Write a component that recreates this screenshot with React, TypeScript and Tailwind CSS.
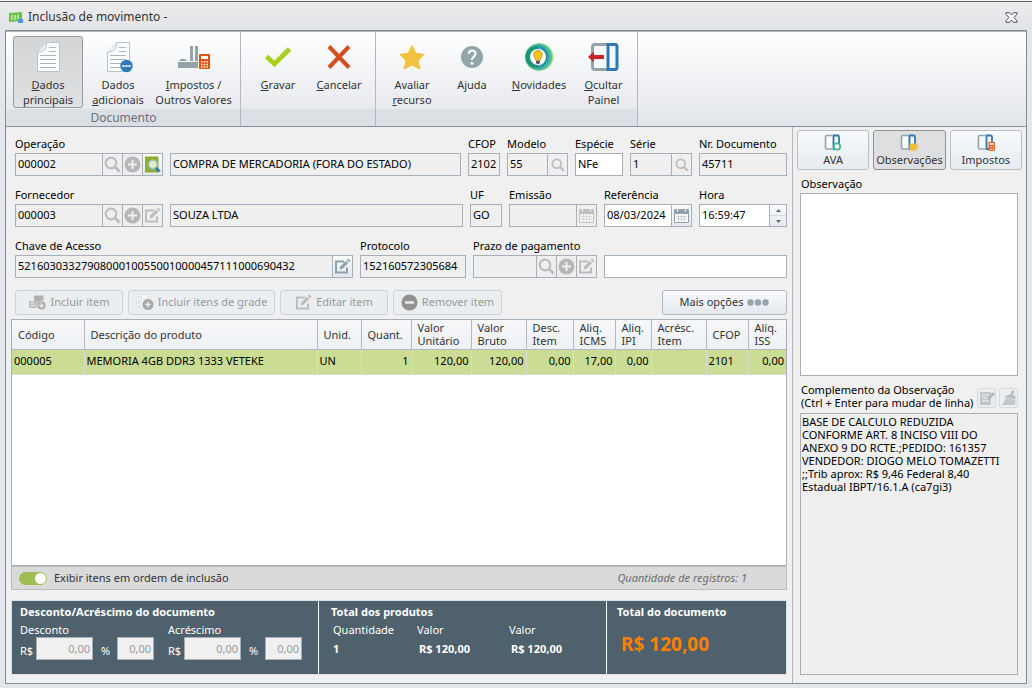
import React from "react";
import type { ReactNode } from "react";

const frame = "border border-[#a9afba]";

function DocIcon({ dots = false }: { dots?: boolean }) {
  return (
    <svg width="32" height="32" viewBox="0 0 32 32" aria-hidden="true">
      <path d="M5.500 11.500 L14.500 1.500 H27.500 V30.500 H5.500 Z" fill="#fdfdfe" stroke="#b4c3c9" />
      <path d="M5.500 11.500 C10 10 14.500 11 14.500 1.500" fill="#eef2f3" stroke="#b4c3c9" />
      <path d="M17 6.500H24M17 10.500H24M8 14.500H24M8 18.500H24M8 22.500H24M8 26.500H24" stroke="#a9b9bf" />
      {dots && (
        <g>
          <circle cx="24.500" cy="25" r="6.200" fill="#2f78bd" />
          <path d="M20.500 24h2v2h-2zM23.500 24h2v2h-2zM26.500 24h2v2h-2z" fill="#fff" />
        </g>
      )}
    </svg>
  );
}

function Calc({ x, y, s }: { x: number; y: number; s: number }) {
  return (
    <g transform={`translate(${x} ${y}) scale(${s})`}>
      <rect width="11" height="15" rx="1" fill="#e0530f" />
      <path d="M2 2h7v3h-7z" fill="#fff" />
      <path d="M2 7h1.500v1.500h-1.500zM4.800 7h1.500v1.500h-1.500zM7.500 7h1.500v1.500h-1.500zM2 9.700h1.500v1.500h-1.500zM4.800 9.700h1.500v1.500h-1.500zM7.500 9.700h1.500v1.500h-1.500zM2 12.300h1.500v1.500h-1.500zM4.800 12.300h1.500v1.500h-1.500zM7.500 12.300h1.500v1.500h-1.500z" fill="#fff" />
    </g>
  );
}

function FactoryIcon() {
  return (
    <svg width="32" height="32" viewBox="0 0 32 32" aria-hidden="true">
      <path d="M0 21h20v6H0zM1 20c1-3 7-3 8 0zM12 5h3v15h-3zM17 5h3v15h-3z" fill="#92a3aa" />
      <Calc x={21} y={13} s={1} />
    </svg>
  );
}

function CheckIcon() {
  return (
    <svg width="32" height="32" viewBox="0 0 32 32" aria-hidden="true">
      <path d="M4.500 15.500 L12.500 23 L27.500 8" fill="none" stroke="#a9d01c" strokeWidth="4.800" />
    </svg>
  );
}

function CrossIcon() {
  return (
    <svg width="32" height="32" viewBox="0 0 32 32" aria-hidden="true">
      <path d="M6 5.500 L26 26.500 M26 5.500 L6 26.500" fill="none" stroke="#d2501f" strokeWidth="4" />
    </svg>
  );
}

function StarIcon() {
  return (
    <svg width="32" height="32" viewBox="0 0 32 32" aria-hidden="true">
      <path d="M16 4.500 L19.800 12.200 L28 13.500 L22.200 19.500 L23.800 28 L16 24 L8.200 28 L9.800 19.500 L4 13.500 L12.200 12.200 Z" fill="#f3c13f" stroke="#f3c13f" strokeLinejoin="round" />
    </svg>
  );
}

function HelpIcon() {
  return (
    <svg width="32" height="32" viewBox="0 0 32 32" aria-hidden="true">
      <circle cx="16" cy="16" r="11" fill="#93a4ab" />
      <path d="M12.800 12.800 C12.800 8.500 19.500 8.500 19.500 12.500 C19.500 15.500 16 15.500 16 19" fill="none" stroke="#fff" strokeWidth="2.200" />
      <circle cx="16" cy="22.200" r="1.500" fill="#fff" />
    </svg>
  );
}

function NewsIcon() {
  return (
    <svg width="32" height="32" viewBox="0 0 32 32" aria-hidden="true">
      <circle cx="17" cy="16" r="13.500" fill="#92e68a" />
      <circle cx="15.500" cy="16" r="13.500" fill="#4fc08c" />
      <path d="M14 3.500 A12 12 0 0 1 14 28 Z" fill="#35a2cf" />
      <circle cx="13.500" cy="16" r="11" fill="#1d9478" />
      <path d="M15 5.500 A11 11 0 0 1 15 26.500 Z" fill="#3fa6d2" />
      <circle cx="15" cy="16" r="8" fill="#fff" />
      <path d="M15 9.500 C10 9.500 10 14.500 12 17 L13 19.500 H17 L18 17 C20 14.500 20 9.500 15 9.500 Z" fill="#fbc416" stroke="#9a8430" strokeWidth=".7" />
      <path d="M13 20h4v2l-1 1h-2l-1-1z" fill="#555c66" />
    </svg>
  );
}

function HidePanelIcon() {
  return (
    <svg width="32" height="32" viewBox="0 0 32 32" aria-hidden="true">
      <path d="M19 3.500 H7 Q4.500 3.500 4.500 6 V26 Q4.500 28.500 7 28.500 H19" fill="#f6f8f9" stroke="#93a4ab" strokeWidth="3" />
      <path d="M20 3.500 H27 Q29 3.500 29 6 V26 Q29 28.500 27 28.500 H20 Z" fill="#f4f8fb" stroke="#3078b5" strokeWidth="3" />
      <path d="M0 16 L6 10.500 V14 H16 V18 H6 V21.500 Z" fill="#c9252c" />
    </svg>
  );
}

function PanelIcon({ kind }: { kind: "ava" | "obs" | "imp" }) {
  return (
    <svg width="18" height="17" viewBox="0 0 18 17" aria-hidden="true">
      <path d="M8 1.500 H3 Q1.500 1.500 1.500 3 V13.500 Q1.500 15 3 15 H8" fill="#fafbfc" stroke="#93a4ab" strokeWidth="1.600" />
      <path d="M9.500 1.500 H13.500 Q15 1.500 15 3 V13.500 Q15 15 13.500 15 H9.500 Z" fill="#f6f9fc" stroke="#3078b5" strokeWidth="1.800" />
      {kind === "ava" && <circle cx="13" cy="12.500" r="3.200" fill="#fff" stroke="#3fb98c" strokeWidth="1.800" />}
      {kind === "obs" && <path d="M9.500 9.500h8v5l-1.500 2H9.500z" fill="#f3bd3c" />}
      {kind === "imp" && <Calc x={11.500} y={8} s={0.58} />}
    </svg>
  );
}

function Magnifier({ small = false }: { small?: boolean }) {
  const size = small ? 14 : 17;
  return (
    <svg width={size} height={size} viewBox="0 0 17 17" aria-hidden="true">
      <circle cx="7" cy="7" r="5.300" fill="none" stroke="#bdbdbd" strokeWidth="2.200" />
      <path d="M11 11 L15.500 15.500" stroke="#bdbdbd" strokeWidth="2.800" />
    </svg>
  );
}

function PlusDisc() {
  return (
    <svg width="17" height="17" viewBox="0 0 17 17" aria-hidden="true">
      <circle cx="8.500" cy="8.500" r="8" fill="#b7b7b7" />
      <path d="M8.500 4v9M4 8.500h9" stroke="#efefef" strokeWidth="2" />
    </svg>
  );
}

function EditIcon({ color = "#bdbdbd" }: { color?: string }) {
  return (
    <svg width="17" height="17" viewBox="0 0 17 17" aria-hidden="true">
      <path d="M10 3.500 H2 V14.500 H13 V9.500" fill="none" stroke={color} strokeWidth="2" />
      <path d="M5.500 11.500 L6.200 8.500 L12 2.700 L14.300 5 L8.500 10.800 Z" fill={color} />
      <path d="M12.800 2 L14.200 .6 L16.500 2.800 L15.100 4.200 Z" fill={color} />
    </svg>
  );
}

function InspectIcon() {
  return (
    <svg width="17" height="17" viewBox="0 0 17 17" aria-hidden="true">
      <path d="M1 0.500h13.500v16H1z" fill="#8fad33" />
      <circle cx="9" cy="8.500" r="4.200" fill="#e9ecc0" stroke="#9cc4d8" strokeWidth="1.500" />
      <path d="M12 12 L15.500 15.500" stroke="#2f78bd" strokeWidth="2.600" />
    </svg>
  );
}

function CalendarIcon({ on = false }: { on?: boolean }) {
  const c = on ? "#8fa2a9" : "#bfbfbf";
  return (
    <svg width="17" height="17" viewBox="0 0 17 17" aria-hidden="true">
      <path d="M1.500 2.500h14v13h-14z" fill={on ? "#fff" : "#f3f3f3"} stroke={c} />
      <path d="M1 3h15v4H1z" fill={c} />
      <path d="M4.500 1v3.500M12.500 1v3.500" stroke={on ? "#eef1f3" : "#efefef"} strokeWidth="1.200" />
      <path d="M3 9.500h11M3 12h11M5.500 7.500v7M8.500 7.500v7M11.500 7.500v7" stroke={c} strokeOpacity=".55" strokeWidth=".8" />
    </svg>
  );
}

function AddItemIcon() {
  return (
    <svg width="18" height="17" viewBox="0 0 18 17" aria-hidden="true">
      <path d="M5 1.500h9.500v9H5z" fill="#b0b0b0" />
      <path d="M0 7h9v7H0z" fill="#c0c0c0" />
      <path d="M2 9h3M2 11.500h4" stroke="#e4e4e4" />
      <circle cx="12.500" cy="11.500" r="4.300" fill="#a9a9a9" stroke="#d8dadc" />
      <path d="M12.500 9v5M10 11.500h5" stroke="#eee" strokeWidth="1.400" />
    </svg>
  );
}

function AddGridIcon() {
  return (
    <svg width="18" height="17" viewBox="0 0 18 17" aria-hidden="true">
      <path d="M.5.500h12v13h-12zM5.500.500v13M.5 5h12M.5 9.500h12" fill="#f6f7f8" stroke="#e2e5e7" />
      <path d="M2 3h2M2 7.500h2M2 12h2" stroke="#c4c4c4" />
      <circle cx="12" cy="10.500" r="5.500" fill="#a9a9a9" />
      <path d="M12 7.800v5.400M9.300 10.500h5.400" stroke="#eee" strokeWidth="1.500" />
    </svg>
  );
}

function MinusDisc() {
  return (
    <svg width="17" height="17" viewBox="0 0 17 17" aria-hidden="true">
      <circle cx="8.500" cy="8.500" r="8" fill="#929292" />
      <path d="M4 8.500h9" stroke="#efefef" strokeWidth="2.400" />
    </svg>
  );
}

function RibbonButton({ icon, lines, hot, active, width }: { icon: ReactNode; lines: string[]; hot: number; active?: boolean; width: string }) {
  return (
    <button
      className={`flex h-[72px] flex-col items-center rounded-[3px] border pt-1 leading-[15px] whitespace-nowrap ${width} ${
        active ? "border-[#989ca2] bg-linear-to-b from-[#d4d5d7] to-[#dfe0e2]" : "border-transparent"
      }`}
    >
      <span className="mb-1 block h-8">{icon}</span>
      {lines.map((line, i) => (
        <span key={line} className="block">
          {i === hot ? (
            <>
              <u>{line[0]}</u>
              {line.slice(1)}
            </>
          ) : (
            line
          )}
        </span>
      ))}
    </button>
  );
}

function RibbonGroup({ caption, children }: { caption?: string; children: ReactNode }) {
  return (
    <div className="flex flex-col border-r border-[#b4b8be]">
      <div className="flex px-1.5 pt-1">{children}</div>
      <div className="mt-px h-[17px] bg-[#dcdfe3] text-center text-[12px] leading-[17px] text-[#6b7080]">{caption}</div>
    </div>
  );
}

function Field({ id, label, value = "", width, white, children }: { id: string; label?: string; value?: string; width: string; white?: boolean; children?: ReactNode }) {
  return (
    <div className={`flex min-w-0 flex-col ${width}`}>
      <label htmlFor={id} className="h-[17px] leading-4 whitespace-nowrap">
        {label}
      </label>
      <div className={`flex h-[23px] ${frame} ${white ? "bg-white" : "bg-[#efefef]"}`}>
        <input id={id} aria-label={label ? undefined : id} defaultValue={value} readOnly={!white} className="min-w-0 flex-1 bg-transparent pl-0.5 outline-none" />
        {children}
      </div>
    </div>
  );
}

function Addon({ label, on, children }: { label: string; on?: boolean; children: ReactNode }) {
  return (
    <button
      type="button"
      aria-label={label}
      className={`flex w-5 shrink-0 items-center justify-center border-l border-[#a9afba] ${on ? "bg-linear-to-b from-[#fafcfd] to-[#e3e8ee]" : ""}`}
    >
      {children}
    </button>
  );
}

function ActionButton({ width, icon, children }: { width: string; icon: ReactNode; children: ReactNode }) {
  return (
    <button disabled className={`flex h-[25px] items-center justify-center gap-1 rounded-[3px] border border-[#cdd2d7] bg-[#ebeef1] whitespace-nowrap text-[#97999c] ${width}`}>
      {icon}
      {children}
    </button>
  );
}

function SideTab({ kind, active, children }: { kind: "ava" | "obs" | "imp"; active?: boolean; children: ReactNode }) {
  return (
    <button
      className={`flex h-10 min-w-0 flex-1 flex-col items-center rounded-[3px] border pt-[3px] leading-[18px] text-[#333] ${
        active ? "border-[#8f9297] bg-[#dedfe1]" : "border-[#b9bec5] bg-linear-to-b from-[#f8fafc] to-[#e6ebf0]"
      }`}
    >
      <PanelIcon kind={kind} />
      {children}
    </button>
  );
}

const columns: { title: string; value: string; width: string; right?: boolean }[] = [
  { title: "Código", value: "000005", width: "w-[72px]" },
  { title: "Descrição do produto", value: "MEMORIA 4GB DDR3 1333 VETEKE", width: "" },
  { title: "Unid.", value: "UN", width: "w-[44px]" },
  { title: "Quant.", value: "1", width: "w-[50px]", right: true },
  { title: "Valor\nUnitário", value: "120,00", width: "w-[60px]", right: true },
  { title: "Valor\nBruto", value: "120,00", width: "w-[55px]", right: true },
  { title: "Desc.\nItem", value: "0,00", width: "w-[47px]", right: true },
  { title: "Aliq.\nICMS", value: "17,00", width: "w-[42px]", right: true },
  { title: "Aliq.\nIPI", value: "0,00", width: "w-[36px]", right: true },
  { title: "Acrésc.\nItem", value: "", width: "w-[55px]" },
  { title: "CFOP", value: "2101", width: "w-[42px]" },
  { title: "Alíq.\nISS", value: "0,00", width: "w-[38px]", right: true },
];

function Amount({ id, unit, name, width }: { id: string; unit: string; name: string; width: string }) {
  return (
    <div className="flex items-center">
      <label htmlFor={id} className="w-4 pt-1 whitespace-nowrap">
        {unit}
      </label>
      <input id={id} aria-label={`${name} ${unit}`} disabled defaultValue="0,00" className={`h-[23px] border border-[#a9afba] bg-[#f0f0f0] pr-0.5 text-right text-[#9b9b9b] ${width}`} />
    </div>
  );
}

export default function App() {
  return (
    <div className="flex min-h-screen flex-col border-t border-[#f4f4f4] bg-[#e4e7ea] font-['Noto_Sans','Open_Sans',sans-serif] text-[11px] text-black">
      <header className="flex h-[29px] items-center border-t border-[#5d6164] bg-linear-to-b from-[#ececee] to-[#e0e3e6] pt-0.5 pr-3.5 pl-2 text-[12px] text-[#333]">
        <svg width="17" height="14" viewBox="0 0 17 14" className="mr-[3px]" aria-hidden="true">
          <path d="M1 3 L14 2 V11 L1 12 Z" fill="#6cc04a" />
          <path d="M4 5v5M7 5v5M10 4.500v5" stroke="#c8ecb6" strokeWidth="1.500" />
          <path d="M10 9h5v4h-5z" fill="#4b9ad6" />
        </svg>
        <h1 className="flex-1">Inclusão de movimento -</h1>
        <button aria-label="Fechar">
          <svg width="13" height="11" viewBox="0 0 13 11" aria-hidden="true">
            <path d="M1 .7h3.500l2 2.300 2-2.300H12v1.500L9 5.500l3 3.300v1.500H8.500l-2-2.300-2 2.300H1V8.800l3-3.300-3-3.300z" fill="#fff" stroke="#4b4f55" />
          </svg>
        </button>
      </header>

      <div className="mx-[5px] mb-1 flex flex-1 flex-col border border-[#858a98] bg-[#f0f0f0]">
        <div className="flex border-t border-b border-t-[#b2b6bc] border-b-[#8b8f9a] bg-linear-to-b from-white to-[#e2e5ea] pl-px text-[#333]">
          <RibbonGroup caption="Documento">
            <RibbonButton width="w-[70px]" icon={<DocIcon />} lines={["Dados", "principais"]} hot={0} active />
            <RibbonButton width="w-[70px]" icon={<DocIcon dots />} lines={["Dados", "adicionais"]} hot={1} />
            <RibbonButton width="w-[81px]" icon={<FactoryIcon />} lines={["Impostos /", "Outros Valores"]} hot={0} />
          </RibbonGroup>
          <RibbonGroup>
            <RibbonButton width="w-[62px]" icon={<CheckIcon />} lines={["Gravar"]} hot={0} />
            <RibbonButton width="w-[60px]" icon={<CrossIcon />} lines={["Cancelar"]} hot={0} />
          </RibbonGroup>
          <RibbonGroup>
            <RibbonButton width="w-[60px]" icon={<StarIcon />} lines={["Avaliar", "recurso"]} hot={1} />
            <RibbonButton width="w-[60px]" icon={<HelpIcon />} lines={["Ajuda"]} hot={-1} />
            <RibbonButton width="w-[74px]" icon={<NewsIcon />} lines={["Novidades"]} hot={0} />
            <RibbonButton width="w-[55px]" icon={<HidePanelIcon />} lines={["Ocultar", "Painel"]} hot={0} />
          </RibbonGroup>
        </div>

        <div className="flex flex-1">
          <main className="flex min-w-0 flex-1 flex-col pt-[9px] pr-[5px] pb-2 pl-[5px]">
            <form className="flex flex-col gap-[11px] pl-1">
              <div className="flex gap-[7px]">
                <Field id="operacao" label="Operação" value="000002" width="w-[148px]">
                  <Addon label="Pesquisar operação"><Magnifier /></Addon>
                  <Addon label="Adicionar operação"><PlusDisc /></Addon>
                  <Addon label="Consultar operação" on><InspectIcon /></Addon>
                </Field>
                <Field id="Descrição da operação" value="COMPRA DE MERCADORIA (FORA DO ESTADO)" width="flex-1" />
                <Field id="cfop" label="CFOP" value="2102" width="w-8" />
                <Field id="modelo" label="Modelo" value="55" width="w-[61px]">
                  <Addon label="Pesquisar modelo"><Magnifier small /></Addon>
                </Field>
                <Field id="especie" label="Espécie" value="NFe" width="w-12" white />
                <Field id="serie" label="Série" value="1" width="w-[62px]">
                  <Addon label="Pesquisar série"><Magnifier small /></Addon>
                </Field>
                <Field id="documento" label="Nr. Documento" value="45711" width="w-[88px]" />
              </div>
              <div className="flex gap-[7px]">
                <Field id="fornecedor" label="Fornecedor" value="000003" width="w-[148px]">
                  <Addon label="Pesquisar fornecedor"><Magnifier /></Addon>
                  <Addon label="Adicionar fornecedor"><PlusDisc /></Addon>
                  <Addon label="Editar fornecedor"><EditIcon /></Addon>
                </Field>
                <Field id="Nome do fornecedor" value="SOUZA LTDA" width="flex-1" />
                <Field id="uf" label="UF" value="GO" width="w-8" />
                <Field id="emissao" label="Emissão" width="w-[88px]">
                  <Addon label="Calendário de emissão"><CalendarIcon /></Addon>
                </Field>
                <Field id="referencia" label="Referência" value="08/03/2024" width="w-[88px]" white>
                  <Addon label="Calendário de referência" on><CalendarIcon on /></Addon>
                </Field>
                <Field id="hora" label="Hora" value="16:59:47" width="w-[88px]" white>
                  <div className="flex w-[17px] flex-col border-l border-[#a9afba] bg-linear-to-b from-[#fafcfd] to-[#e3e8ee]">
                    <button type="button" aria-label="Aumentar" className="flex flex-1 items-center justify-center border-b border-[#d5d9de]">
                      <svg width="5" height="3" viewBox="0 0 5 3" aria-hidden="true"><path d="M0 3 2.500 0 5 3z" fill="#666" /></svg>
                    </button>
                    <button type="button" aria-label="Diminuir" className="flex flex-1 items-center justify-center">
                      <svg width="5" height="3" viewBox="0 0 5 3" aria-hidden="true"><path d="M0 0 2.500 3 5 0z" fill="#666" /></svg>
                    </button>
                  </div>
                </Field>
              </div>
              <div className="flex gap-[7px]">
                <Field id="chave" label="Chave de Acesso" value="52160303327908000100550010000457111000690432" width="flex-1">
                  <Addon label="Editar chave" on><EditIcon color="#8fa2a9" /></Addon>
                </Field>
                <Field id="protocolo" label="Protocolo" value="152160572305684" width="w-[106px]" />
                <Field id="prazo" label="Prazo de pagamento" width="w-[124px]">
                  <Addon label="Pesquisar prazo"><Magnifier /></Addon>
                  <Addon label="Adicionar prazo"><PlusDisc /></Addon>
                  <Addon label="Editar prazo"><EditIcon /></Addon>
                </Field>
                <Field id="Descrição do prazo" width="w-[183px]" white />
              </div>
            </form>

            <div className="mt-3 flex gap-[5px] pl-1">
              <ActionButton width="w-[108px]" icon={<AddItemIcon />}>Incluir item</ActionButton>
              <ActionButton width="w-[147px]" icon={<AddGridIcon />}>Incluir itens de grade</ActionButton>
              <ActionButton width="w-[108px]" icon={<EditIcon />}>Editar item</ActionButton>
              <ActionButton width="w-[109px]" icon={<MinusDisc />}>Remover item</ActionButton>
              <button className="ml-auto flex h-[25px] w-[125px] items-center justify-center gap-1 rounded-[3px] border border-[#b4b9c1] bg-linear-to-b from-[#f8fafc] to-[#e4e9ee] text-[#333]">
                Mais opções
                <svg width="22" height="7" viewBox="0 0 22 7" fill="#93a4ab" aria-hidden="true">
                  <circle cx="3.500" cy="3.500" r="3.200" /><circle cx="11" cy="3.500" r="3.200" /><circle cx="18.500" cy="3.500" r="3.200" />
                </svg>
              </button>
            </div>

            <section className="mt-1 flex flex-1 flex-col border border-[#a9afba] bg-white">
              <table className="w-full table-fixed border-collapse">
                <thead>
                  <tr className="h-[29px] bg-linear-to-b from-[#f7f8fa] to-[#edf0f4]">
                    {columns.map((c, i) => (
                      <th key={i} className={`border-r border-b border-[#b4b8c2] p-0 pl-1.5 text-left leading-[13px] font-normal whitespace-pre text-[#333] last:border-r-0 ${c.width}`}>
                        {c.title}
                      </th>
                    ))}
                  </tr>
                </thead>
                <tbody>
                  <tr className="h-[25px] bg-[#cbdd94]">
                    {columns.map((c, i) => (
                      <td key={i} className={`border-r border-b border-[#d9dcd8] px-0.5 py-0 whitespace-nowrap last:border-r-0 ${c.right ? "text-right" : "text-left"}`}>
                        {c.value}
                      </td>
                    ))}
                  </tr>
                </tbody>
              </table>
            </section>
            <div className="flex h-6 items-center border border-[#bcbcbc] bg-[#dadada] pr-[39px] pl-[7px]">
              <label className="flex items-center gap-[7px] text-[#333]">
                <input type="checkbox" defaultChecked className="peer sr-only" />
                <span className="flex h-[13px] w-7 items-center justify-end rounded-full bg-[#a1bd52] pr-px">
                  <span className="h-[11px] w-[11px] rounded-full bg-white" />
                </span>
                Exibir itens em ordem de inclusão
              </label>
              <span className="ml-auto text-[#6d6d6d] italic">Quantidade de registros: 1</span>
            </div>

            <section className="mt-2.5 flex h-[75px] border border-[#dde1e3] bg-[#4e616c] text-white">
              <div className="w-[307px] border-r border-white pt-[3px] pl-2">
                <h2 className="leading-[15px] font-bold">Desconto/Acréscimo do documento</h2>
                <div className="mt-[3px] flex leading-[15px]">
                  <div className="w-[148px]">
                    <p>Desconto</p>
                    <div className="flex gap-2">
                      <Amount id="dr" unit="R$" name="Desconto" width="w-[57px]" />
                      <Amount id="dp" unit="%" name="Desconto" width="w-[37px]" />
                    </div>
                  </div>
                  <div>
                    <p>Acréscimo</p>
                    <div className="flex gap-2">
                      <Amount id="ar" unit="R$" name="Acréscimo" width="w-[57px]" />
                      <Amount id="ap" unit="%" name="Acréscimo" width="w-[37px]" />
                    </div>
                  </div>
                </div>
              </div>
              <div className="flex-1 border-r border-white pt-[3px] pl-3">
                <h2 className="leading-[15px] font-bold">Total dos produtos</h2>
                <dl className="mt-[3px] grid grid-cols-[84px_92px_1fr] gap-y-1 pl-0.5 leading-[15px]">
                  <dt>Quantidade</dt>
                  <dt>Valor</dt>
                  <dt>Valor</dt>
                  <dd className="font-bold">1</dd>
                  <dd className="pl-0.5 font-bold">R$ 120,00</dd>
                  <dd className="pl-0.5 font-bold">R$ 120,00</dd>
                </dl>
              </div>
              <div className="w-[179px] pt-[3px] pl-2.5">
                <h2 className="leading-[15px] font-bold">Total do documento</h2>
                <p className="mt-[13px] pl-1 text-[19px] leading-6 font-bold text-[#ff8000]">R$ 120,00</p>
              </div>
            </section>
          </main>

          <aside className="flex w-[234px] shrink-0 flex-col border-l border-[#b4b8be] pt-[3px] pr-1 pb-2 pl-1">
            <div className="flex gap-1">
              <SideTab kind="ava">AVA</SideTab>
              <SideTab kind="obs" active>Observações</SideTab>
              <SideTab kind="imp">Impostos</SideTab>
            </div>
            <div className="flex flex-1 flex-col pr-1 pl-[3px]">
              <label htmlFor="obs" className="mt-1.5 h-[17px] pl-px leading-4">Observação</label>
              <textarea id="obs" className={`w-full flex-[183_0_0px] resize-none bg-white outline-none ${frame}`} />
              <div className="mt-[7px] mb-1 flex h-[26px] items-center gap-[3px]">
                <label htmlFor="comp" className="flex-1 pl-px leading-[13px] whitespace-nowrap">
                  Complemento da Observação
                  <br />
                  (Ctrl + Enter para mudar de linha)
                </label>
                <button aria-label="Editar complemento" className="mt-1 flex h-5 w-[19px] items-center justify-center rounded-[2px] border border-[#d5dade] bg-[#ebeef0]">
                  <svg width="16" height="16" viewBox="0 0 16 16" aria-hidden="true">
                    <path d="M1 2h11v13H1z" fill="#c3c5c6" />
                    <path d="M3 5h7M3 8h7M3 11h7" stroke="#eceeef" />
                    <path d="M8 9 L14 2 L16 4 L10 10 Z" fill="#b3b5b6" />
                  </svg>
                </button>
                <button aria-label="Limpar complemento" className="mt-1 flex h-5 w-[19px] items-center justify-center rounded-[2px] border border-[#d5dade] bg-[#ebeef0]">
                  <svg width="16" height="16" viewBox="0 0 16 16" aria-hidden="true">
                    <path d="M11 0.500 L13.500 1 L12 5 L14.500 6 L14.500 9 L4 8 L5 5.500 L9 4.500 Z" fill="#bcbebf" />
                    <path d="M4 8.500 L14.500 9.500 L14 15 H1 Q4 12 4 8.500 Z" fill="#c3c5c6" />
                  </svg>
                </button>
              </div>
              <textarea
                id="comp"
                readOnly
                className={`w-full flex-[262_0_0px] resize-none overflow-hidden bg-[#efefef] px-px pt-px leading-[13px] outline-none ${frame}`}
                defaultValue={"BASE DE CALCULO REDUZIDA\nCONFORME ART. 8 INCISO VIII DO\nANEXO 9 DO RCTE.;PEDIDO: 161357\nVENDEDOR: DIOGO MELO TOMAZETTI\n;;Trib aprox: R$ 9,46 Federal 8,40\nEstadual IBPT/16.1.A (ca7gi3)"}
              />
            </div>
          </aside>
        </div>
      </div>
    </div>
  );
}
